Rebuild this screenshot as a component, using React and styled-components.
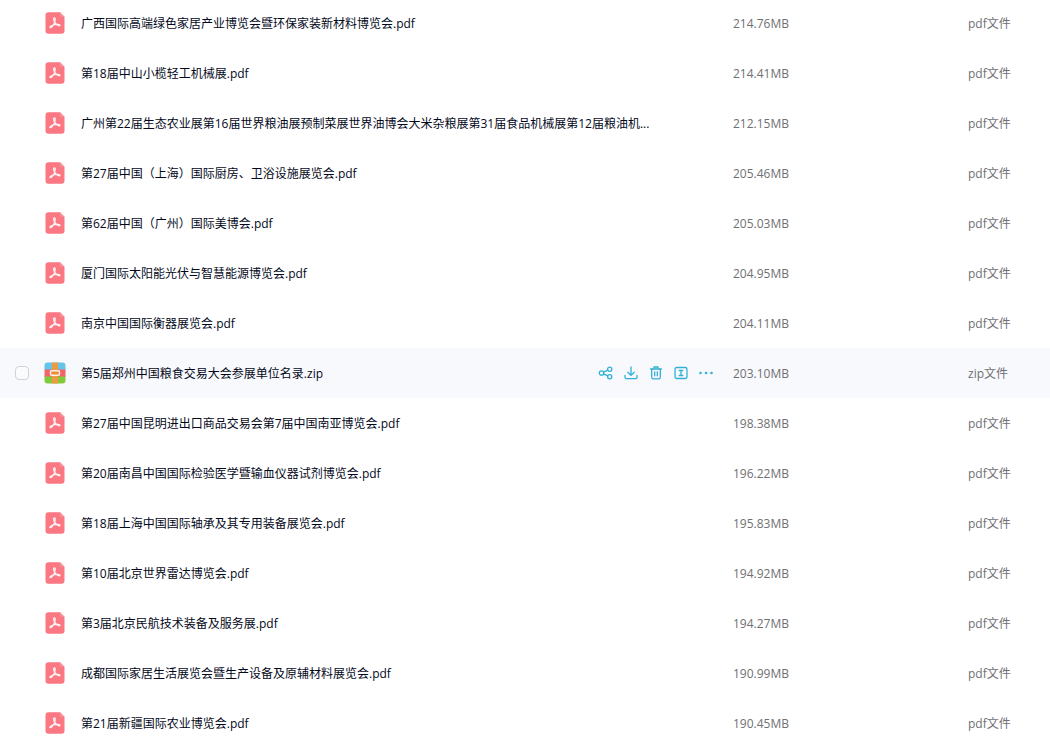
import React from 'react';
import styled, { createGlobalStyle } from 'styled-components';

const GlobalStyle = createGlobalStyle`
    * {
        box-sizing: border-box;
    }
    body {
        margin: 0;
        background: #fff;
        overflow: hidden;
        font-family: "Open Sans", "Noto Sans CJK SC", sans-serif;
        font-size: 12px;
    }
`;

// the list is scrolled by a couple of pixels
const ListViewport = styled.main`
    width: 100%;
    height: 100vh;
    overflow: hidden;
`;

const FileTable = styled.table`
    width: 100%;
    margin-top: -2px;
    table-layout: fixed;
    border-collapse: collapse;
`;

const FileRow = styled.tr`
    height: 50px;
    background: ${props => (props.$active ? '#f8f9fc' : '#fff')};
`;

const Cell = styled.td`
    padding: 0;
    line-height: 20px;
    vertical-align: middle;
    white-space: nowrap;
`;

const InfoCell = styled(Cell)`
    padding-top: 2px;
    color: #6f7073;
`;

const CheckCol = styled.col`
    width: 44px;
`;

const SizeCol = styled.col`
    width: 235px;
`;

const TypeCol = styled.col`
    width: 82px;
`;

const Checkbox = styled.input`
    appearance: none;
    display: block;
    width: 14px;
    height: 14px;
    margin: 0 0 0 15px;
    border: 1px solid #d0d2d8;
    border-radius: 4px;
    background: #fafbfd;
    opacity: ${props => (props.$shown ? 1 : 0)};
`;

const NameContent = styled.div`
    display: flex;
    align-items: center;
    padding-right: 19px;
`;

const FileIcon = styled.svg`
    flex: none;
    display: block;
    width: 22px;
    height: 22px;
    margin-right: 15px;
`;

const FileName = styled.span`
    flex: 1;
    min-width: 0;
    padding-top: 2px;
    overflow: hidden;
    text-overflow: ellipsis;
    color: #03081a;
`;

const Actions = styled.div`
    flex: none;
    display: flex;
    gap: 9px;
`;

const ActionButton = styled.button`
    width: 16px;
    height: 16px;
    padding: 0;
    border: none;
    background: none;
    color: #31b1d6;
    cursor: pointer;

    svg {
        display: block;
        width: 16px;
        height: 16px;
        fill: none;
        stroke: currentColor;
        stroke-width: 1.3;
        stroke-linecap: round;
        stroke-linejoin: round;
    }
`;

const PdfIcon = () => (
    <FileIcon viewBox="0 0 22 22" aria-hidden="true">
        <path d="M4.500 0.300h11.500l4.500 4.500v13.900a3 3 0 0 1-3 3h-13a3 3 0 0 1-3-3V3.300a3 3 0 0 1 3-3z" fill="#fb7782" />
        <path d="M16 0.300l4.500 4.500h-3a1.500 1.500 0 0 1-1.500-1.500z" fill="#f4949c" />
        <path
            d="M10.300 6c1.500 0 1 2.500 0 5-1 2.300-2.600 4.900-4 4.700-1.300-.4 1-2.500 4-3.100 2.600-.6 5.800-.3 5.700.8-.2 1.200-3.300-.2-4.900-2.600-1.500-2.200-2-4.800-.8-4.800z"
            fill="none"
            stroke="#fff0f1"
            strokeWidth="1.300"
            strokeLinejoin="round"
        />
    </FileIcon>
);

const ZipIcon = () => (
    <FileIcon viewBox="0 0 22 22" aria-hidden="true">
        <path d="M3.500 0.500h15a3 3 0 0 1 3 3V8h-21V3.500a3 3 0 0 1 3-3z" fill="#66c4ea" />
        <path d="M0.500 7.500h21V15h-21z" fill="#f0646a" />
        <path d="M0.500 14.500h21v4a3 3 0 0 1-3 3h-15a3 3 0 0 1-3-3z" fill="#80ca3c" />
        <path d="M8 0.500h6v21H8z" fill="#ee9a43" />
        <rect x="6.500" y="8.700" width="9" height="4.600" rx="1" fill="#ef8a40" stroke="#fff3e2" strokeWidth="1.400" />
    </FileIcon>
);

const ShareIcon = () => (
    <svg viewBox="0 0 16 16" aria-hidden="true">
        <circle cx="3.500" cy="8" r="2.200" />
        <circle cx="11.700" cy="4.300" r="2.100" />
        <circle cx="11.700" cy="11.700" r="2.100" />
        <path d="M5.600 7.100l4.100-1.900M5.600 8.900l4.100 1.900" />
    </svg>
);

const DownloadIcon = () => (
    <svg viewBox="0 0 16 16" aria-hidden="true">
        <path d="M8 2v8M4.800 7.200L8 10.400l3.200-3.200M2 10.500v1.700a1.500 1.500 0 0 0 1.500 1.500h9a1.500 1.500 0 0 0 1.500-1.500v-1.700" />
    </svg>
);

const TrashIcon = () => (
    <svg viewBox="0 0 16 16" aria-hidden="true">
        <path d="M2.500 4h11M5.500 4l.6-2h3.800l.6 2M3.700 4v8.200a1.700 1.700 0 0 0 1.700 1.700h5.200a1.700 1.700 0 0 0 1.700-1.700V4M6.700 6.800v4M9.300 6.800v4" />
    </svg>
);

const RenameIcon = () => (
    <svg viewBox="0 0 16 16" aria-hidden="true">
        <rect x="2" y="2.500" width="12" height="11" rx="1.700" />
        <path d="M6.200 5.500h3.600M8 5.500v5M6.200 10.500h3.600" />
    </svg>
);

const MoreIcon = () => (
    <svg viewBox="0 0 16 16" aria-hidden="true">
        <g fill="currentColor" stroke="none">
            <circle cx="2.500" cy="8" r="1.300" />
            <circle cx="8" cy="8" r="1.300" />
            <circle cx="13.500" cy="8" r="1.300" />
        </g>
    </svg>
);

const actions = [
    { label: '分享', Icon: ShareIcon },
    { label: '下载', Icon: DownloadIcon },
    { label: '删除', Icon: TrashIcon },
    { label: '重命名', Icon: RenameIcon },
    { label: '更多', Icon: MoreIcon },
];

const files = [
    { name: '广西国际高端绿色家居产业博览会暨环保家装新材料博览会.pdf', size: '214.76MB', type: 'pdf' },
    { name: '第18届中山小榄轻工机械展.pdf', size: '214.41MB', type: 'pdf' },
    { name: '广州第22届生态农业展第16届世界粮油展预制菜展世界油博会大米杂粮展第31届食品机械展第12届粮油机...', size: '212.15MB', type: 'pdf' },
    { name: '第27届中国（上海）国际厨房、卫浴设施展览会.pdf', size: '205.46MB', type: 'pdf' },
    { name: '第62届中国（广州）国际美博会.pdf', size: '205.03MB', type: 'pdf' },
    { name: '厦门国际太阳能光伏与智慧能源博览会.pdf', size: '204.95MB', type: 'pdf' },
    { name: '南京中国国际衡器展览会.pdf', size: '204.11MB', type: 'pdf' },
    { name: '第5届郑州中国粮食交易大会参展单位名录.zip', size: '203.10MB', type: 'zip', active: true },
    { name: '第27届中国昆明进出口商品交易会第7届中国南亚博览会.pdf', size: '198.38MB', type: 'pdf' },
    { name: '第20届南昌中国国际检验医学暨输血仪器试剂博览会.pdf', size: '196.22MB', type: 'pdf' },
    { name: '第18届上海中国国际轴承及其专用装备展览会.pdf', size: '195.83MB', type: 'pdf' },
    { name: '第10届北京世界雷达博览会.pdf', size: '194.92MB', type: 'pdf' },
    { name: '第3届北京民航技术装备及服务展.pdf', size: '194.27MB', type: 'pdf' },
    { name: '成都国际家居生活展览会暨生产设备及原辅材料展览会.pdf', size: '190.99MB', type: 'pdf' },
    { name: '第21届新疆国际农业博览会.pdf', size: '190.45MB', type: 'pdf' },
];

const FileListItem = ({ file }) => (
    <FileRow $active={file.active}>
        <Cell>
            <Checkbox type="checkbox" aria-label={file.name} $shown={file.active} />
        </Cell>
        <Cell>
            <NameContent>
                {file.type === 'zip' ? <ZipIcon /> : <PdfIcon />}
                <FileName>{file.name}</FileName>
                {file.active && (
                    <Actions>
                        {actions.map(({ label, Icon }) => (
                            <ActionButton key={label} type="button" aria-label={label}>
                                <Icon />
                            </ActionButton>
                        ))}
                    </Actions>
                )}
            </NameContent>
        </Cell>
        <InfoCell>{file.size}</InfoCell>
        <InfoCell>{file.type}文件</InfoCell>
    </FileRow>
);

const App = () => (
    <ListViewport>
        <GlobalStyle />
        <FileTable>
            <colgroup>
                <CheckCol />
                <col />
                <SizeCol />
                <TypeCol />
            </colgroup>
            <tbody>
                {files.map(file => (
                    <FileListItem key={file.name} file={file} />
                ))}
            </tbody>
        </FileTable>
    </ListViewport>
);

export default App;
